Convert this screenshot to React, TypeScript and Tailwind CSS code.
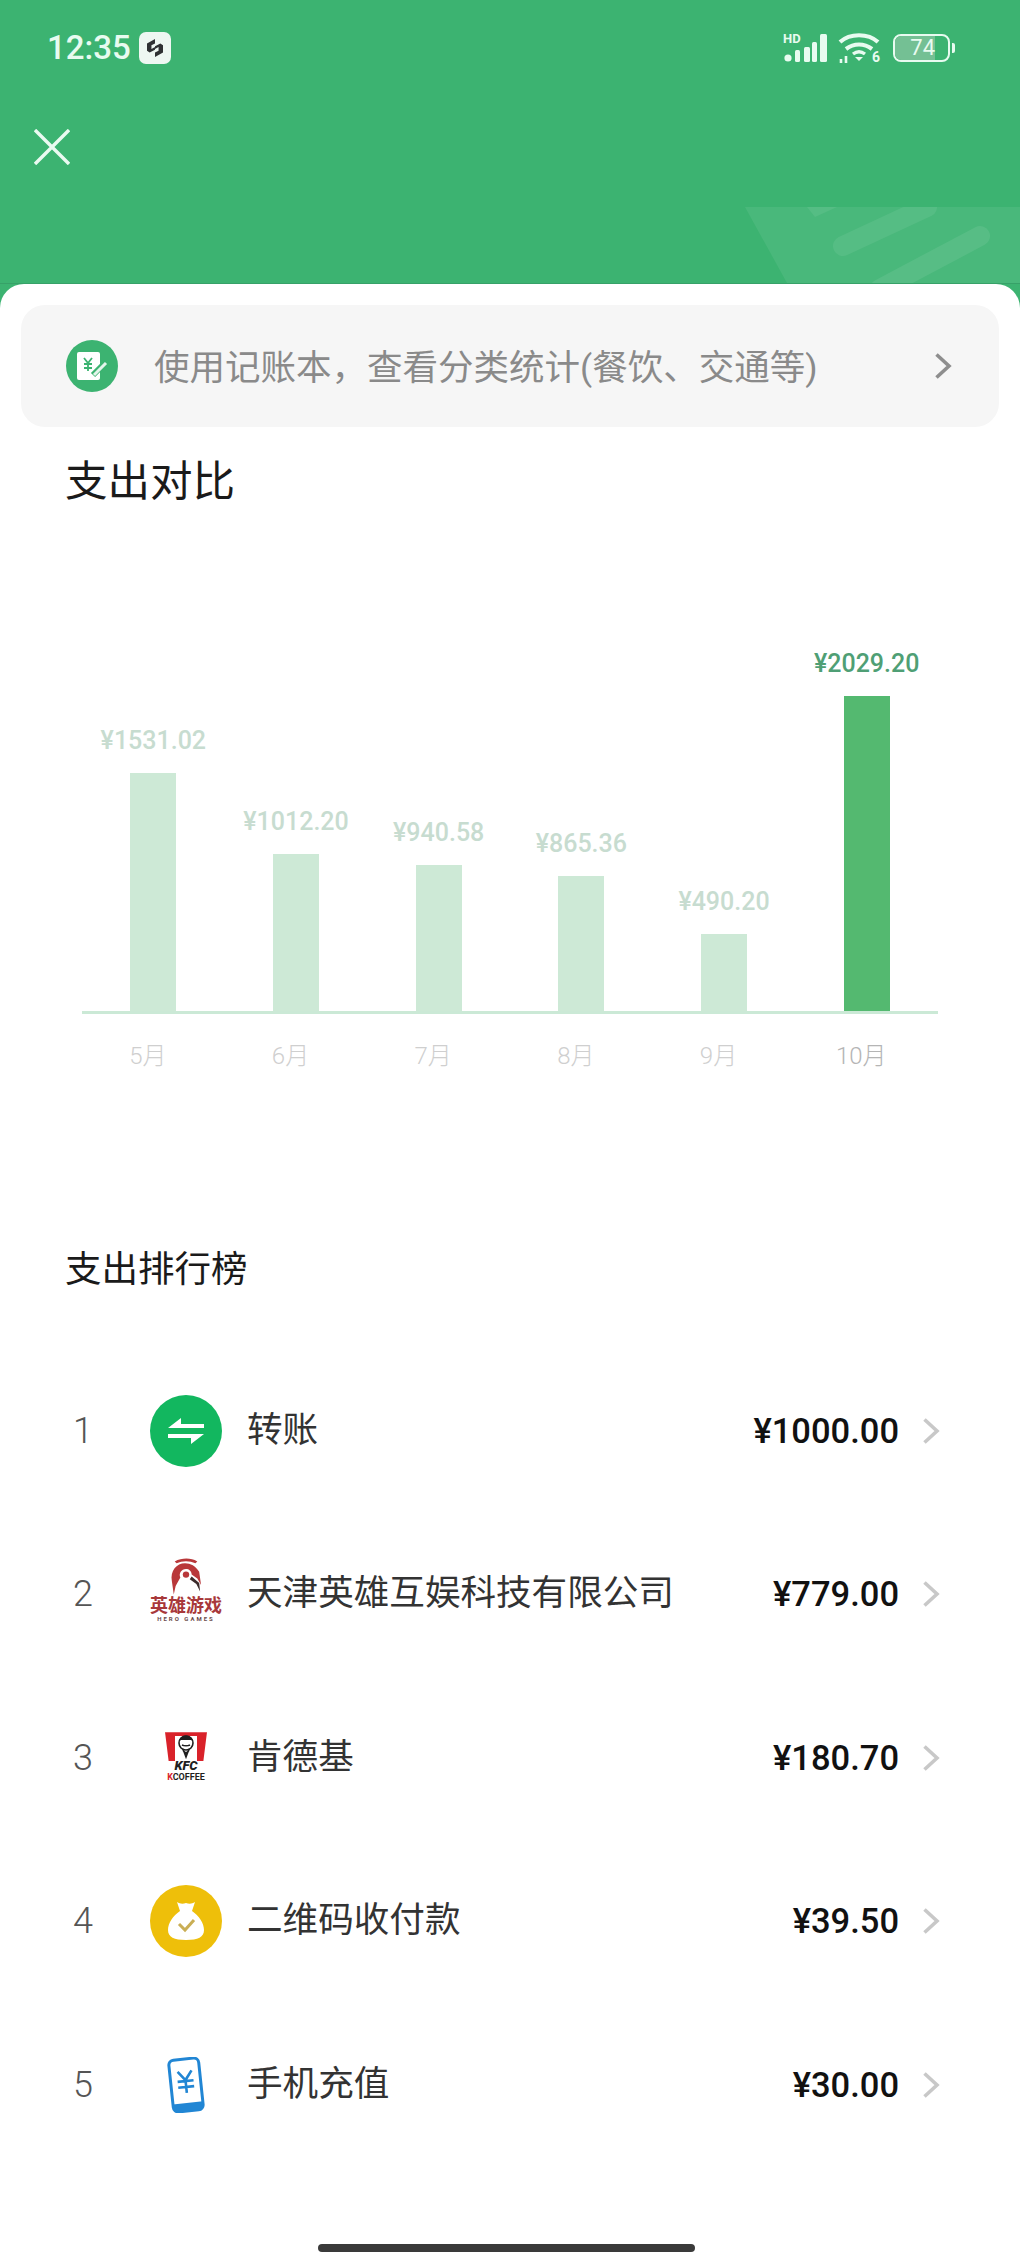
const bars = [
  { month: "5月", label: "¥1531.02", height: 238 },
  { month: "6月", label: "¥1012.20", height: 157 },
  { month: "7月", label: "¥940.58", height: 146 },
  { month: "8月", label: "¥865.36", height: 135 },
  { month: "9月", label: "¥490.20", height: 77 },
  { month: "10月", label: "¥2029.20", height: 315, active: true },
]

function Chevron({ className }: { className: string }) {
  return (
    <svg viewBox="0 0 18 28" className={className} fill="none" stroke="currentColor" strokeWidth="3.6">
      <path d="M2.5 2.5 15 14 2.5 25.5" />
    </svg>
  )
}

function StatusBar() {
  return (
    <div className="flex h-[94px] items-center justify-between pl-[47px] pr-[65px] pt-[1px] text-[#e8fbf0]">
      <div className="flex items-center gap-[8px]">
        <span className="text-[33px] font-medium leading-none">12:35</span>
        <span className="flex h-[32px] w-[32px] items-center justify-center rounded-[7px] bg-[#eef7f2]">
          <svg viewBox="0 0 18 20" className="h-[18px] w-[16px]" fill="#2f3133">
            <path d="M9 0v5L5 7v4l4-2v3L3 15 0 13V5zM9 20v-5l4-2V9l-4 2V8l6-3 3 2v8z" />
          </svg>
        </span>
      </div>
      <div className="flex items-center">
        <div className="relative h-[30px] w-[44px]">
          <span className="absolute left-0 top-[-1px] text-[13px] font-bold leading-[14px]">HD</span>
          <svg viewBox="0 0 44 30" className="h-[30px] w-[44px]" fill="currentColor">
            <circle cx="5" cy="25" r="3.6" />
            <rect x="12" y="17" width="5" height="12" rx="1.5" />
            <rect x="21" y="14" width="6" height="15" rx="1.5" />
            <rect x="29" y="9" width="5" height="20" rx="1.5" />
            <rect x="37" y="1" width="7" height="28" rx="1.5" />
          </svg>
        </div>
        <div className="relative ml-[11px] h-[32px] w-[42px]">
          <svg viewBox="0 0 42 32" className="h-[32px] w-[42px]" fill="none" stroke="currentColor" strokeWidth="4.2">
            <path d="M2 10C12 1 30 1 40 10M8 17c8-6 18-6 26 0" />
            <path d="M15 22c4-3 8-3 12 0" strokeWidth="3.4" />
            <path d="M17 25h8l-4 4z" fill="currentColor" stroke="none" />
            <path d="M3 27v4M8 24v7" strokeWidth="2.6" />
          </svg>
          <span className="absolute bottom-0 right-0 text-[14px] font-bold leading-[14px]">6</span>
        </div>
        <div className="ml-[13px] flex h-[28px] w-[57px] overflow-hidden rounded-[8px] border-[2.5px] border-[#e8fbf0]">
          <div className="flex h-full w-[40px] items-center justify-end bg-[#74c094] text-[22px] leading-none">74</div>
        </div>
        <div className="ml-[2px] h-[10px] w-[3px] rounded-r-[2px] bg-[#e8fbf0]" />
      </div>
    </div>
  )
}

function HeaderDecor() {
  return (
    <svg viewBox="0 0 275 76" className="absolute bottom-0 right-0 h-[76px] w-[275px]">
      <path d="M0 0h275v76H42z" fill="#fff" opacity="0.07" />
      <path d="M98 39 182 0" stroke="#fff" strokeOpacity="0.07" strokeWidth="20" strokeLinecap="round" />
      <path d="M135 82 235 29" stroke="#fff" strokeOpacity="0.08" strokeWidth="20" strokeLinecap="round" />
      <path d="M62 0h30L70 10z" fill="#fff" opacity="0.07" />
    </svg>
  )
}

function BookIcon() {
  return (
    <span className="flex h-[52px] w-[52px] shrink-0 items-center justify-center rounded-full bg-[#3cb371]">
      <svg viewBox="0 0 34 32" className="h-[32px] w-[34px]">
        <rect x="2" y="2" width="23" height="28" rx="2" fill="#fff" />
        <path d="M9 8l4 5 4-5M13 13v8M9 14h8M9 18h8" stroke="#3cb371" strokeWidth="1.8" fill="none" />
        <path d="M18 25 31 12" stroke="#3cb371" strokeWidth="6" />
        <path d="M19 25 31 13" stroke="#e4f5eb" strokeWidth="3" />
      </svg>
    </span>
  )
}

function TransferIcon() {
  return (
    <span className="flex h-[72px] w-[72px] items-center justify-center rounded-full bg-[#12b75f]">
      <svg viewBox="0 0 36 28" className="h-[28px] w-[36px]" fill="#fff">
        <path d="M0 11 13 1v6h23v4zM36 17 23 27v-6H0v-4z" />
      </svg>
    </span>
  )
}

function HeroLogo() {
  return (
    <div className="flex h-[72px] w-[76px] flex-col items-center text-[#a8383a]">
      <svg viewBox="0 0 34 38" className="h-[37px] w-[32px]" fill="#b9383a">
        <path d="M5 3C13-1 22-1 29 3L27 5C21 2 13 2 7 5z" />
        <path d="M2 24C0 13 7 5 16 5c6 0 11 3 15 9l2 14-4-7-6-4c0-4-3-6-6-6-5 0-8 5-6 9l-5 9-2 9z" />
        <circle cx="17" cy="17" r="3.4" />
        <path d="M23 19 31 26l1 9-4-8-7-5z" fill="#3c2b2b" />
      </svg>
      <span className="mt-[1px] text-[18px] font-bold leading-[19px] tracking-[0px] whitespace-nowrap">英雄游戏</span>
      <span className="text-[6px] font-bold leading-[8px] tracking-[2px] text-[#6b4b4b] whitespace-nowrap">HERO GAMES</span>
    </div>
  )
}

function KfcLogo() {
  return (
    <div className="flex w-[72px] flex-col items-center">
      <div className="relative flex h-[40px] w-[42px] items-end justify-center bg-white [clip-path:polygon(0_0,100%_0,88%_100%,12%_100%)]">
        <div className="absolute inset-x-0 top-0 flex h-[29px] justify-between">
          <div className="w-[10px] bg-[#d9222a]" />
          <div className="h-[4px] w-[22px] bg-[#d9222a]" />
          <div className="w-[10px] bg-[#d9222a]" />
        </div>
        <svg viewBox="0 0 18 26" className="absolute left-[12px] top-[2px] h-[26px] w-[18px]">
          <circle cx="9" cy="9" r="7" fill="#fff" stroke="#1f1f1f" strokeWidth="1.6" />
          <path d="M3 6c3-5 9-5 12 0M5 11c2 1 6 1 8 0M6 15c1 5 5 5 6 0l-3 8z" stroke="#1f1f1f" strokeWidth="1.6" fill="#1f1f1f" />
        </svg>
        <span className="relative text-[13px] font-black italic leading-[13px] text-[#1f1f1f]">KFC</span>
      </div>
      <span className="text-[9px] font-bold leading-[11px] text-[#1f1f1f]">
        <span className="text-[#d9222a]">K</span>COFFEE
      </span>
    </div>
  )
}

function BagIcon() {
  return (
    <span className="flex h-[72px] w-[72px] items-center justify-center rounded-full bg-[#eebf0a]">
      <svg viewBox="0 0 36 40" className="h-[40px] w-[36px]">
        <path d="M9 1c3 2 6 2 9 1 3 1 6 1 9-1l-3 9c7 5 12 12 12 19 0 7-6 10-18 10S0 36 0 29c0-7 5-14 12-19z" fill="#fff" />
        <path d="M11 23l6 6 9-10" stroke="#c9ae55" strokeWidth="3" fill="none" />
      </svg>
    </span>
  )
}

function PhoneIcon() {
  return (
    <svg viewBox="0 0 40 56" className="h-[56px] w-[40px]">
      <g transform="rotate(-6 20 28)">
        <rect x="5" y="2" width="30" height="52" rx="5" fill="#fff" stroke="#2186d4" strokeWidth="3" />
        <path d="M5 46h30v3a5 5 0 0 1-5 5H10a5 5 0 0 1-5-5z" fill="#2186d4" />
        <path d="M13 14l7 9 7-9M20 23v13M12 24h16M12 30h16" stroke="#2186d4" strokeWidth="2.6" fill="none" />
      </g>
    </svg>
  )
}

const rows = [
  { rank: 1, icon: <TransferIcon />, name: "转账", amount: "¥1000.00" },
  { rank: 2, icon: <HeroLogo />, name: "天津英雄互娱科技有限公司", amount: "¥779.00" },
  { rank: 3, icon: <KfcLogo />, name: "肯德基", amount: "¥180.70" },
  { rank: 4, icon: <BagIcon />, name: "二维码收付款", amount: "¥39.50" },
  { rank: 5, icon: <PhoneIcon />, name: "手机充值", amount: "¥30.00" },
]

export default function App() {
  return (
    <div className="flex h-[2267px] w-[1020px] flex-col overflow-hidden bg-[#3cb371] font-['Roboto','Noto_Sans_CJK_SC',sans-serif]">
      <div className="relative h-[284px] shrink-0 border-b border-[#37a168]">
        <StatusBar />
        <svg viewBox="0 0 36 36" className="ml-[34px] mt-[35px] h-[36px] w-[36px]" stroke="#eafaf1" strokeWidth="3.4" fill="none">
          <path d="M1 1l34 34M35 1 1 35" />
        </svg>
        <HeaderDecor />
      </div>

      <div className="flex flex-1 flex-col rounded-t-[24px] bg-white pt-[21px]">
        <div className="mx-[21px] flex h-[122px] items-center rounded-[24px] bg-[#f6f6f6] pl-[45px] pr-[47px]">
          <BookIcon />
          <span className="ml-[36px] flex-1 whitespace-nowrap pt-[6px] text-[35.5px] leading-none text-[#8a8a8a]">
            使用记账本，查看分类统计(餐饮、交通等)
          </span>
          <Chevron className="h-[28px] w-[18px] text-[#8e8e8e]" />
        </div>

        <h2 className="ml-[65px] mt-[30px] text-[42.5px] leading-[50px] text-[#1a1a1a]">支出对比</h2>

        <div className="mx-[82px] mt-[144px] flex h-[363px] items-end border-b-[3px] border-[#cbe9d6]">
          {bars.map((bar) => (
            <div key={bar.month} className="flex flex-1 flex-col items-center">
              <span
                className={
                  bar.active
                    ? "mb-[17px] whitespace-nowrap text-[25px] font-medium leading-[30px] text-[#4f9f75]"
                    : "mb-[17px] whitespace-nowrap text-[25px] font-medium leading-[30px] text-[#c7dcd0]"
                }
              >
                {bar.label}
              </span>
              <div
                className={bar.active ? "w-[46px] bg-[#54b970]" : "w-[46px] bg-[#cde9d6]"}
                style={{ height: bar.height }}
              />
            </div>
          ))}
        </div>
        <div className="mx-[82px] mt-[26px] flex">
          {bars.map((bar) => (
            <span
              key={bar.month}
              className={
                bar.active
                  ? "flex-1 pr-[11px] text-center text-[24px] font-light leading-[32px] text-[#b5b5b5]"
                  : "flex-1 pr-[11px] text-center text-[24px] font-light leading-[32px] text-[#cfcfcf]"
              }
            >
              {bar.month}
            </span>
          ))}
        </div>

        <h2 className="ml-[65px] mt-[176px] text-[36.5px] leading-[44px] text-[#1a1a1a]">支出排行榜</h2>

        <div className="mt-[57px] flex flex-col">
          {rows.map((row) => (
            <div key={row.rank} className="flex h-[163.5px] items-center">
              <span className="ml-[73px] w-[60px] text-[36px] font-light leading-none text-[#555]">{row.rank}</span>
              <span className="flex w-[106px] items-center justify-center">{row.icon}</span>
              <span className="ml-[8px] flex-1 whitespace-nowrap text-[35.6px] leading-none text-[#333]">{row.name}</span>
              <span className="text-[34.5px] font-medium leading-none text-[#111]">{row.amount}</span>
              <Chevron className="ml-[23px] mr-[80px] h-[28px] w-[18px] text-[#c8c8c8]" />
            </div>
          ))}
        </div>

        <div className="mb-[15px] ml-[318px] mt-auto h-[8px] w-[377px] rounded-full bg-[#3a3a3a]" />
      </div>
    </div>
  )
}
